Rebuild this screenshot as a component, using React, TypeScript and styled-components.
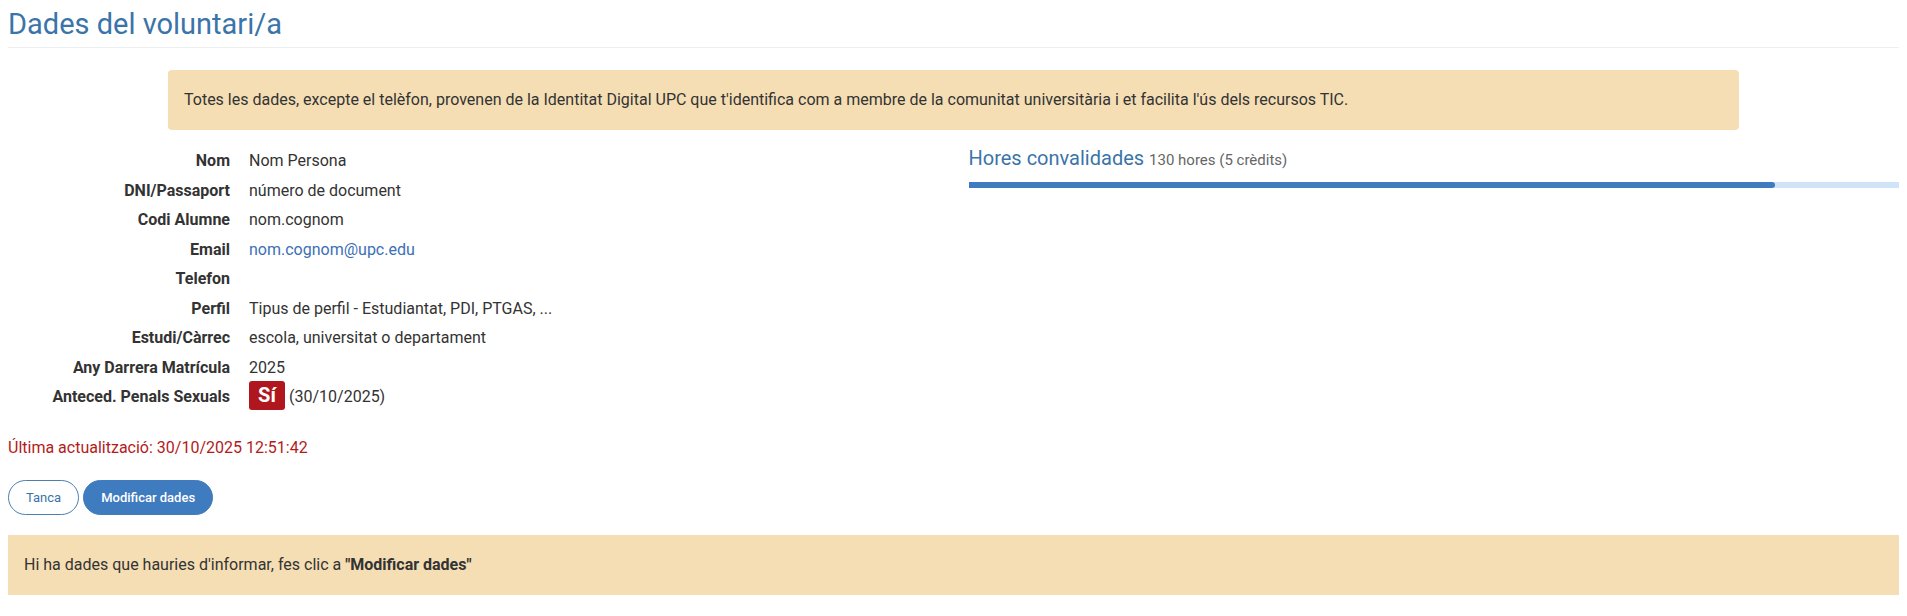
import React from 'react'
import styled, { createGlobalStyle } from 'styled-components'

const GlobalStyle = createGlobalStyle`
  body {
    margin: 0;
    background: #fff;
    font-family: Roboto, "Liberation Sans", Arial, sans-serif;
    font-size: 16px;
    color: #333;
  }
`

const Page = styled.div`
  padding: 0 8px;
`

const Title = styled.h2`
  margin: 0;
  padding-top: 8px;
  padding-bottom: 7px;
  font-size: 29px;
  font-weight: 400;
  line-height: 32px;
  color: #3a74a8;
  border-bottom: 1px solid #eceeef;
`

const Alert = styled.div<{ $centered?: boolean }>`
  background: #f5deb3;
  color: #333;
  font-size: 16px;
  line-height: 20px;
  border-radius: ${({ $centered }) => ($centered ? '4px' : '0')};
  padding: 20px 16px;
  margin: ${({ $centered }) => ($centered ? '22px 160px 0' : '20px 0 0')};

  > b {
    font-weight: 700;
  }
`

const Columns = styled.div`
  display: grid;
  grid-template-columns: 1fr 1fr;
  column-gap: 30px;
  margin-top: 20px;
`

const DataList = styled.dl`
  display: grid;
  grid-template-columns: 222px 1fr;
  column-gap: 19px;
  row-gap: 8px;
  margin: 0;
  line-height: 21.5px;
`

const Label = styled.dt`
  text-align: right;
  font-weight: 700;
  color: #333;
`

const Value = styled.dd`
  margin: 0;
  min-height: 21.5px;
`

const Link = styled.a`
  color: #3b70b5;
  text-decoration: none;
`

const Badge = styled.span`
  display: inline-block;
  vertical-align: middle;
  margin-top: -5px;
  margin-right: 4px;
  width: 36px;
  height: 29px;
  line-height: 29px;
  text-align: center;
  border-radius: 3px;
  background: #b0161e;
  color: #fff;
  font-size: 20px;
  font-weight: 700;
`

const HoursTitle = styled.h3`
  margin: -3px 0 0;
  font-size: 20px;
  font-weight: 400;
  line-height: 22px;
  color: #3a74a8;

  > small {
    font-size: 15px;
    line-height: 22px;
    color: #666;
  }
`

const Track = styled.div`
  margin-top: 11px;
  height: 6px;
  background: #cfe3f9;
`

const Fill = styled.div`
  height: 100%;
  background: #3f7bbf;
  border-radius: 0 3px 3px 0;
`

const Updated = styled.p`
  margin: 28px 0 0;
  color: #b31b1b;
  line-height: 20px;
`

const Buttons = styled.div`
  display: flex;
  gap: 4px;
  margin-top: 22px;
`

const Button = styled.button<{ $primary?: boolean }>`
  all: unset;
  cursor: pointer;
  box-sizing: border-box;
  height: 35px;
  padding: 0 17px;
  border-radius: 18px;
  font-family: Roboto, "Liberation Sans", Arial, sans-serif;
  font-size: 13px;
  font-weight: ${({ $primary }) => ($primary ? 500 : 400)};
  line-height: 33px;
  border: 1px solid ${({ $primary }) => ($primary ? '#3f7bbf' : '#4a7fb0')};
  background: ${({ $primary }) => ($primary ? '#3f7bbf' : '#fff')};
  color: ${({ $primary }) => ($primary ? '#fff' : '#3a74a8')};
`

const rows: { label: string; value: React.ReactNode }[] = [
  { label: 'Nom', value: 'Nom Persona' },
  { label: 'DNI/Passaport', value: 'número de document' },
  { label: 'Codi Alumne', value: 'nom.cognom' },
  { label: 'Email', value: <Link href="#">nom.cognom@upc.edu</Link> },
  { label: 'Telefon', value: '' },
  { label: 'Perfil', value: 'Tipus de perfil - Estudiantat, PDI, PTGAS, ...' },
  { label: 'Estudi/Càrrec', value: 'escola, universitat o departament' },
  { label: 'Any Darrera Matrícula', value: '2025' },
  {
    label: 'Anteced. Penals Sexuals',
    value: (
      <>
        <Badge>Sí</Badge>(30/10/2025)
      </>
    ),
  },
]

const hours = 130
const maxHours = 150

const App = () => {
  return (
    <>
      <GlobalStyle />
      <Page>
        <Title>Dades del voluntari/a</Title>
        <Alert $centered>
          Totes les dades, excepte el telèfon, provenen de la Identitat Digital UPC que t'identifica com a membre de la comunitat universitària i et facilita l'ús dels recursos TIC.
        </Alert>
        <Columns>
          <DataList>
            {rows.map((row) => (
              <React.Fragment key={row.label}>
                <Label>{row.label}</Label>
                <Value>{row.value}</Value>
              </React.Fragment>
            ))}
          </DataList>
          <div>
            <HoursTitle>
              Hores convalidades <small>{hours} hores (5 crèdits)</small>
            </HoursTitle>
            <Track>
              <Fill style={{ width: `${(hours / maxHours) * 100}%` }} />
            </Track>
          </div>
        </Columns>
        <Updated>Última actualització: 30/10/2025 12:51:42</Updated>
        <Buttons>
          <Button>Tanca</Button>
          <Button $primary>Modificar dades</Button>
        </Buttons>
        <Alert>
          Hi ha dades que hauries d'informar, fes clic a <b>"Modificar dades"</b>
        </Alert>
      </Page>
    </>
  )
}

export default App
